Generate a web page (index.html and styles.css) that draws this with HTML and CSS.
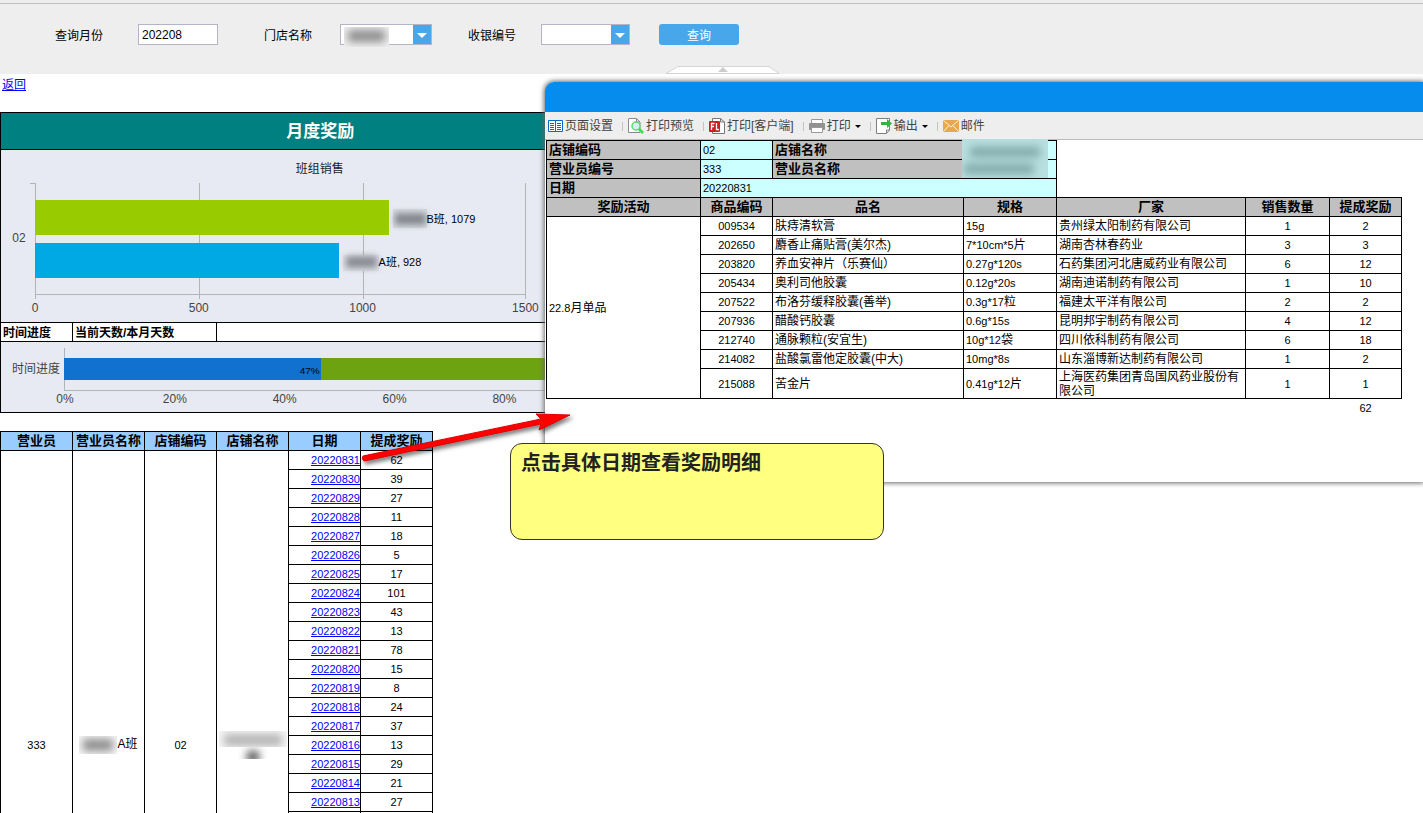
FILE: index.html
```html
<!DOCTYPE html>
<html lang="zh-CN">
<head>
<meta charset="utf-8">
<title>月度奖励</title>
<link rel="stylesheet" href="styles.css">
</head>
<body>
<form class="query">
  <label for="month">查询月份</label>
  <input class="field" id="month" type="text" value="202208">
  <label for="store">门店名称</label>
  <span class="combo combo-store"><select id="store"><option></option></select><i class="mask mask-store"></i></span>
  <label for="cashier">收银编号</label>
  <span class="combo combo-cashier"><select id="cashier"><option></option></select></span>
  <button class="submit" type="button">查询</button>
  <svg class="fold" width="114" height="8" viewBox="0 0 114 8"><path d="M0 7.500 12 .5H103L113 7.500Z" fill="#fff" stroke="#d4d4d4"/><path d="M52 6 57 1 62 6Z" fill="#ccc"/></svg>
</form>

<main class="page">
  <a class="back" href="#">返回</a>
  <section class="report">
    <h1>月度奖励</h1>
    <svg class="chart" viewBox="0 0 640 172">
      <defs><filter id="soft" x="-30%" y="-50%" width="160%" height="200%"><feGaussianBlur stdDeviation="3"/></filter></defs>
      <text class="axis title" x="320" y="23" text-anchor="middle">班组销售</text>
      <path d="M199.500 33V149M363.500 33V149M526.500 33V149M30 33.500H35.500V149M35 144.500H527" fill="none" stroke="#b4b4b8"/>
      <rect x="35" y="50" width="354" height="35" fill="#99cc00"/>
      <rect x="35" y="93" width="304" height="35" fill="#00a8e4"/>
      <rect x="393" y="59" width="34" height="19" fill="#d8dbe2"/>
      <rect x="395" y="63" width="31" height="12" fill="#868990" filter="url(#soft)"/>
      <rect x="343" y="105" width="36" height="16" fill="#dfe1e8"/>
      <rect x="346" y="106" width="31" height="12" fill="#8c8e95" filter="url(#soft)"/>
      <text class="value" x="427" y="73">B班, 1079</text>
      <text class="value" x="379" y="116">A班, 928</text>
      <g class="axis" text-anchor="middle">
        <text x="19" y="92">02</text>
        <text x="35" y="162">0</text><text x="199" y="162">500</text><text x="363" y="162">1000</text><text x="526" y="162">1500</text>
      </g>
    </svg>
    <div class="caption"><b>时间进度</b><b class="days">当前天数/本月天数</b></div>
    <svg class="chart" viewBox="0 0 640 70">
      <path d="M64.500 6V48.500H616" fill="none" stroke="#b4b4b8"/>
      <rect x="64" y="16" width="257" height="22" fill="#1071ce"/>
      <rect x="321" y="16" width="294" height="22" fill="#6da311"/>
      <text class="value small" x="320" y="32" text-anchor="end">47%</text>
      <g class="axis" text-anchor="middle">
        <text x="36" y="31">时间进度</text>
        <text x="65" y="61">0%</text><text x="175" y="61">20%</text><text x="285" y="61">40%</text><text x="395" y="61">60%</text><text x="505" y="61">80%</text><text x="615" y="61">100%</text>
      </g>
    </svg>
  </section>

  <table class="grid daily">
    <colgroup><col><col><col><col><col><col></colgroup>
    <thead><tr><th>营业员</th><th>营业员名称</th><th>店铺编码</th><th>店铺名称</th><th>日期</th><th>提成奖励</th></tr></thead>
    <tbody>
      <tr><td rowspan="20">333</td><td rowspan="20"><i class="mask mask-clerk"></i><span class="cn">A班</span></td><td rowspan="20">02</td><td rowspan="20"><i class="mask mask-shop"></i><i class="mask mask-shop2"></i></td><td class="date"><a href="#">20220831</a></td><td>62</td></tr>
      <tr><td class="date"><a href="#">20220830</a></td><td>39</td></tr>
      <tr><td class="date"><a href="#">20220829</a></td><td>27</td></tr>
      <tr><td class="date"><a href="#">20220828</a></td><td>11</td></tr>
      <tr><td class="date"><a href="#">20220827</a></td><td>18</td></tr>
      <tr><td class="date"><a href="#">20220826</a></td><td>5</td></tr>
      <tr><td class="date"><a href="#">20220825</a></td><td>17</td></tr>
      <tr><td class="date"><a href="#">20220824</a></td><td>101</td></tr>
      <tr><td class="date"><a href="#">20220823</a></td><td>43</td></tr>
      <tr><td class="date"><a href="#">20220822</a></td><td>13</td></tr>
      <tr><td class="date"><a href="#">20220821</a></td><td>78</td></tr>
      <tr><td class="date"><a href="#">20220820</a></td><td>15</td></tr>
      <tr><td class="date"><a href="#">20220819</a></td><td>8</td></tr>
      <tr><td class="date"><a href="#">20220818</a></td><td>24</td></tr>
      <tr><td class="date"><a href="#">20220817</a></td><td>37</td></tr>
      <tr><td class="date"><a href="#">20220816</a></td><td>13</td></tr>
      <tr><td class="date"><a href="#">20220815</a></td><td>29</td></tr>
      <tr><td class="date"><a href="#">20220814</a></td><td>21</td></tr>
      <tr><td class="date"><a href="#">20220813</a></td><td>27</td></tr>
      <tr class="rest"><td></td><td></td></tr>
    </tbody>
  </table>
</main>

<section class="window">
  <header class="titlebar"></header>
  <nav class="toolbar">
    <button type="button"><svg width="15" height="16" viewBox="0 0 15 16"><path d="M.5 2.500H14.500V13.500H.5ZM7.500 2.500V13.500" fill="#fff" stroke="#0868c4"/><path d="M2 5.500H6M2 7.500H6M2 9.500H6M2 11.500H6M9 5.500H13M9 7.500H13M9 9.500H13M9 11.500H13" stroke="#0868c4"/></svg>页面设置</button>
    <button type="button"><svg width="16" height="16" viewBox="0 0 16 16"><path d="M1 .5H8.500L12 4V14.500H.5V.5M8.500.5V4H12" fill="#fff" stroke="#8a8a8a"/><circle cx="8" cy="8" r="4" fill="#d5effc" stroke="#5cda68" stroke-width="1.500"/><path d="M11 11 15 15" stroke="#38dd4c" stroke-width="2.500"/></svg>打印预览</button>
    <button type="button"><svg width="16" height="16" viewBox="0 0 16 16"><path d="M3.500.5H11.500L15.500 4V15.500H3.500ZM11.500.5V4H15.500" fill="#fff" stroke="#777"/><rect y="3" width="11" height="11" rx="1" fill="#d01e26"/><path d="M2.500 12V5.500H5.500M2.500 8.500H5M7.500 5V11.500H10" fill="none" stroke="#fff" stroke-width="1.300"/></svg>打印[客户端]</button>
    <button type="button"><svg width="16" height="16" viewBox="0 0 16 16"><path d="M2.500 5V1.500H13.500V5" fill="#fff" stroke="#999"/><rect y="5" width="16" height="7" rx="1" fill="#929292"/><path d="M2.500 9.500H13.500V14.500H2.500Z" fill="#fff" stroke="#999"/></svg>打印<i class="caret"></i></button>
    <button type="button"><svg width="16" height="16" viewBox="0 0 16 16"><path d="M.5.5H13.500V12L10.500 15.500H.5ZM10.500 15V12H13.500" fill="#fff" stroke="#808080"/><path d="M5 4H11V1L16 5.500 11 10V7H5Z" fill="#35b14a"/></svg>输出<i class="caret"></i></button>
    <button type="button"><svg width="16" height="16" viewBox="0 0 16 16"><rect y="2" width="16" height="12" rx="1" fill="#e9a84b"/><path d="M.5 2.500 8 9 15.500 2.500M.5 13.500 6 7.500M15.500 13.500 10 7.500" fill="none" stroke="#fff4df"/></svg>邮件</button>
  </nav>
  <table class="grid detail">
    <colgroup><col class="w-act"><col class="w-code"><col class="w-name"><col class="w-spec"><col class="w-maker"><col class="w-qty"><col class="w-code"></colgroup>
    <tbody>
      <tr><th class="left">店铺编码</th><td class="info">02</td><th class="left">店铺名称</th><td class="info"><i class="mask mask-detail"></i></td></tr>
      <tr><th class="left">营业员编号</th><td class="info">333</td><th class="left">营业员名称</th><td class="info"></td></tr>
      <tr><th class="left">日期</th><td class="info" colspan="3">20220831</td></tr>
      <tr><th>奖励活动</th><th>商品编码</th><th>品名</th><th>规格</th><th>厂家</th><th>销售数量</th><th>提成奖励</th></tr>
      <tr><td class="left" rowspan="9">22.8<span class="cn">月单品</span></td><td>009534</td><td class="left cn">肤痔清软膏</td><td class="left">15g</td><td class="left cn">贵州绿太阳制药有限公司</td><td>1</td><td>2</td></tr>
      <tr><td>202650</td><td class="left cn">麝香止痛贴膏(美尔杰)</td><td class="left">7*10cm*5<span class="cn">片</span></td><td class="left cn">湖南杏林春药业</td><td>3</td><td>3</td></tr>
      <tr><td>203820</td><td class="left cn">养血安神片（乐赛仙）</td><td class="left">0.27g*120s</td><td class="left cn">石药集团河北唐威药业有限公司</td><td>6</td><td>12</td></tr>
      <tr><td>205434</td><td class="left cn">奥利司他胶囊</td><td class="left">0.12g*20s</td><td class="left cn">湖南迪诺制药有限公司</td><td>1</td><td>10</td></tr>
      <tr><td>207522</td><td class="left cn">布洛芬缓释胶囊(善举)</td><td class="left">0.3g*17<span class="cn">粒</span></td><td class="left cn">福建太平洋有限公司</td><td>2</td><td>2</td></tr>
      <tr><td>207936</td><td class="left cn">醋酸钙胶囊</td><td class="left">0.6g*15s</td><td class="left cn">昆明邦宇制药有限公司</td><td>4</td><td>12</td></tr>
      <tr><td>212740</td><td class="left cn">通脉颗粒(安宜生)</td><td class="left">10g*12<span class="cn">袋</span></td><td class="left cn">四川依科制药有限公司</td><td>6</td><td>18</td></tr>
      <tr><td>214082</td><td class="left cn">盐酸氯雷他定胶囊(中大)</td><td class="left">10mg*8s</td><td class="left cn">山东淄博新达制药有限公司</td><td>1</td><td>2</td></tr>
      <tr class="tall"><td>215088</td><td class="left cn">苦金片</td><td class="left">0.41g*12<span class="cn">片</span></td><td class="left cn">上海医药集团青岛国风药业股份有限公司</td><td>1</td><td>1</td></tr>
      <tr><td class="bare" colspan="6"></td><td class="bare">62</td></tr>
    </tbody>
  </table>
</section>

<svg class="arrow" width="230" height="70" viewBox="0 0 230 70"><path d="M3 46 181 9 176 4 210 5 179 20 181 14 4 51Q1 49 3 46Z" fill="#f00" stroke="#e00000" stroke-linejoin="round"/></svg>
<aside class="callout">点击具体日期查看奖励明细</aside>
</body>
</html>
```
FILE: styles.css
```css
* { box-sizing: border-box; }
html { height: 100%; }
body {
  position: relative;
  height: 100%;
  margin: 0;
  overflow: hidden;
  background: #fff;
  color: #000;
  font: 12px/14px "Liberation Sans", "Noto Sans CJK SC", sans-serif;
}
button, input, select { margin: 0; font: inherit; }
i { font-style: normal; }
a { color: #00f; }

.query {
  position: relative;
  display: grid;
  grid-template-columns: 83px 126px 76px 128px 73px 118px 80px;
  align-items: center;
  height: 74px;
  padding: 0 0 5px 55px;
  background: linear-gradient(#c0c0c0, #c0c0c0) 0 3px / 100% 1px no-repeat #eee;
}
.query label { padding-top: 2px; }
.field, .combo {
  height: 21px;
  border: 1px solid #b4b4c8;
  background: #fff;
}
.field { width: 80px; padding: 0 3px; }
.combo { position: relative; }
.combo-store { width: 92px; }
.combo-cashier { width: 89px; }
.combo select {
  display: block;
  width: 100%;
  height: 100%;
  border: 0;
  appearance: none;
  background: linear-gradient(#48a7ea, #48a7ea) right / 18px 100% no-repeat;
}
.combo::after {
  content: "";
  position: absolute;
  top: 8px;
  right: 4px;
  border: 5px solid transparent;
  border-top-color: #fff;
  border-bottom: 0;
  pointer-events: none;
}
.submit {
  height: 21px;
  padding: 3px 0 0;
  border: 0;
  border-radius: 3px;
  background: #48a7ea;
  color: #fff;
}
.fold { position: absolute; left: 666px; bottom: 0; }

/* Blurred patches over private names */
.mask { display: inline-block; overflow: hidden; vertical-align: middle; background: #f0f0f0; }
.mask::before {
  content: "";
  display: block;
  height: 12px;
  margin: 3px 4px;
  background: #8c8c8c;
  filter: blur(4px);
}
.mask-store { position: absolute; top: 2px; left: 3px; width: 45px; height: 20px; }
.mask-clerk { width: 38px; height: 18px; background: #f6f6f6; }
.mask-shop { display: block; width: 68px; height: 16px; margin: 0 auto; background: #f7f7f7; }
.mask-shop::before { margin: 3px 5px; background: #b4b4b4; }
.mask-shop2 { display: block; width: 30px; height: 12px; margin: 0 auto; background: #fff; }
.mask-shop2::before { margin: 4px 9px; background: #555; }
.mask-detail { position: absolute; top: -2px; left: -2px; z-index: 1; width: 86px; height: 39px; background: #b9e0e0; }
.mask-detail::before { height: 10px; margin: 8px 8px; background: #81a8a8; box-shadow: -6px 17px #81a8a8; }

.back { display: block; width: 24px; margin: 4px 0 0 2px; }
.report { width: 45%; margin-top: 20px; border: 1px solid #000; border-left: 0; background: #e7eaf2; box-shadow: inset 1px 0 #000; }
.report h1 {
  margin: 0;
  padding: 7px 0 5px;
  border-bottom: 1px solid #000;
  border-left: 1px solid #000;
  background: #008080;
  color: #fff;
  font-size: 17px;
  line-height: 24px;
  text-align: center;
}
.chart { display: block; width: 100%; height: auto; shape-rendering: crispEdges; }
.axis { fill: #444; font-size: 12px; }
.title { fill: #222; }
.value { fill: #000; font-size: 11px; }
.small { font-size: 10px; }
.caption {
  display: flex;
  height: 20px;
  border: solid #000;
  border-width: 1px 0 1px 1px;
  background: #fff;
  line-height: 20px;
}
.caption b { width: 72px; padding-left: 2px; border-right: 1px solid #000; }
.caption .days { width: 144px; }

.grid { border-collapse: collapse; table-layout: fixed; }
.grid th, .grid td { height: 19px; padding: 0; border: 1px solid #000; text-align: center; }
.grid th { font-size: 13px; }
.grid td { font-size: 11px; }
.grid .left { padding-left: 2px; text-align: left; }
.grid .cn { font-size: 12px; }
.daily { width: 433px; margin-top: 18px; }
.daily th { background: #99ccff; white-space: nowrap; }
.grid .date { text-align: right; }
.grid .rest td { height: 228px; }

.window {
  position: absolute;
  top: 82px;
  right: 0;
  left: 545px;
  height: 400px;
  border-radius: 9px 0 0 0;
  background: #fff;
  box-shadow: 0 0 5px 1px #666;
}
.titlebar { height: 30px; border-radius: 9px 0 0 0; background: #058cec; }
.toolbar {
  display: flex;
  align-items: center;
  height: 28px;
  padding: 1px 0 0 3px;
  border-bottom: 1px solid #bbb;
  background: #eee;
}
.toolbar button {
  display: flex;
  align-items: center;
  gap: 2px;
  padding: 0;
  border: 0;
  background: none;
  color: #444;
  white-space: nowrap;
}
.toolbar button + button::before { content: ""; width: 1px; height: 9px; margin: 0 3px 0 9px; background: #c4c4c4; }
.caret { margin-left: 2px; border: 3px solid transparent; border-top-color: #000; border-bottom: 0; }
.detail { width: 856px; margin-left: 1px; }
.w-act { width: 154px; }
.w-code { width: 72px; }
.w-name { width: 191px; }
.w-spec { width: 93px; }
.w-maker { width: 189px; }
.w-qty { width: 84px; }
.detail th { background: #c0c0c0; }
.grid .info { position: relative; padding-left: 2px; background: #ccffff; text-align: left; }
.grid .tall td { height: 30px; }
.grid .bare { border: 0; }

.arrow { position: absolute; top: 410px; left: 360px; filter: drop-shadow(2px 3px 2px #0008); }
.callout {
  position: absolute;
  top: 443px;
  left: 510px;
  width: 374px;
  height: 97px;
  padding: 7px 10px;
  border: 1px solid #333;
  border-radius: 12px;
  background: #ffff80;
  color: #222;
  font-size: 20px;
  font-weight: bold;
  line-height: 24px;
}
```
